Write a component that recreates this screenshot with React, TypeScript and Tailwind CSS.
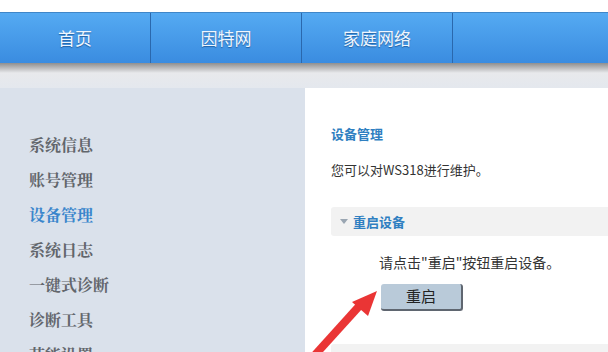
const navItems = ["首页", "因特网", "家庭网络"];
const sideItems = ["系统信息", "账号管理", "设备管理", "系统日志", "一键式诊断", "诊断工具", "节能设置"];

const cjk = "font-['Microsoft_YaHei','Noto_Sans_CJK_SC',sans-serif]";

export default function App() {
    return (
        <div className={`relative w-[608px] h-[352px] overflow-hidden bg-white ${cjk}`}>
            <div className="h-[12px] bg-white" />

            {/* Top nav */}
            <div className="flex h-[51px] bg-gradient-to-b from-[#55aaf2] to-[#3a8ce0] border-t border-[#3f86c8]">
                {navItems.map((item) => (
                    <div
                        key={item}
                        className="w-[151px] shrink-0 flex items-center justify-center border-r border-[#2a68ad] text-[17px] text-[#eef6ff] [text-shadow:0_1px_1px_rgba(0,40,90,0.5)]"
                    >
                        {item}
                    </div>
                ))}
                <div className="flex-1" />
            </div>

            {/* Shadow band */}
            <div className="h-[25px] bg-gradient-to-b from-[#8f8f8f] via-[#e8e9ec] via-40% to-[#e4e8ee]" />

            <div className="flex h-[264px]">
                {/* Sidebar */}
                <div className="w-[305px] shrink-0 bg-[#dae1eb] pt-[39px] pl-[29px]">
                    {sideItems.map((item) => (
                        <div
                            key={item}
                            className={`h-[35px] leading-[35px] text-[16px] font-bold font-['Noto_Serif_CJK_SC','Noto_Sans_CJK_SC',serif] ${
                                item === "设备管理" ? "text-[#3a86cc]" : "text-[#62666c]"
                            }`}
                        >
                            {item}
                        </div>
                    ))}
                </div>

                {/* Content */}
                <div className="flex-1 bg-white pl-[26px] pt-[37px]">
                    <div className="text-[13px] font-bold text-[#2f7fc1] leading-[18px]">设备管理</div>
                    <div className="mt-[18px] text-[13px] text-[#333] leading-[18px]">
                        您可以对WS318进行维护。
                    </div>

                    <div className="mt-[28px] h-[29px] bg-[#f2f2f2] rounded-l-[3px] flex items-center pl-[9px] gap-[5px]">
                        <span className="w-0 h-0 border-l-[4px] border-r-[4px] border-t-[5px] border-l-transparent border-r-transparent border-t-[#9aa6b2]" />
                        <span className="text-[13px] font-bold text-[#2f7fc1]">重启设备</span>
                    </div>

                    <div className="mt-[16px] pl-[48px] text-[14px] text-[#333] leading-[20px]">
                        请点击"重启"按钮重启设备。
                    </div>

                    <div className="mt-[11px] pl-[50px]">
                        <button className="w-[82px] h-[27px] bg-[#b9cad9] rounded-[3px] border-r-2 border-b-2 border-[#5f6670] text-[15px] text-[#222]">
                            重启
                        </button>
                    </div>

                    <div className="mt-[33px] h-[10px] bg-[#f2f2f2] rounded-l-[3px]" />
                </div>
            </div>

            {/* Red annotation arrow */}
            <svg className="absolute left-0 top-0" width="608" height="352" viewBox="0 0 608 352">
                <line x1="314" y1="356" x2="362" y2="303" stroke="#ea3535" strokeWidth="8" />
                <polygon points="377,291 352,302 368,316" fill="#ea3535" />
            </svg>
        </div>
    );
}
